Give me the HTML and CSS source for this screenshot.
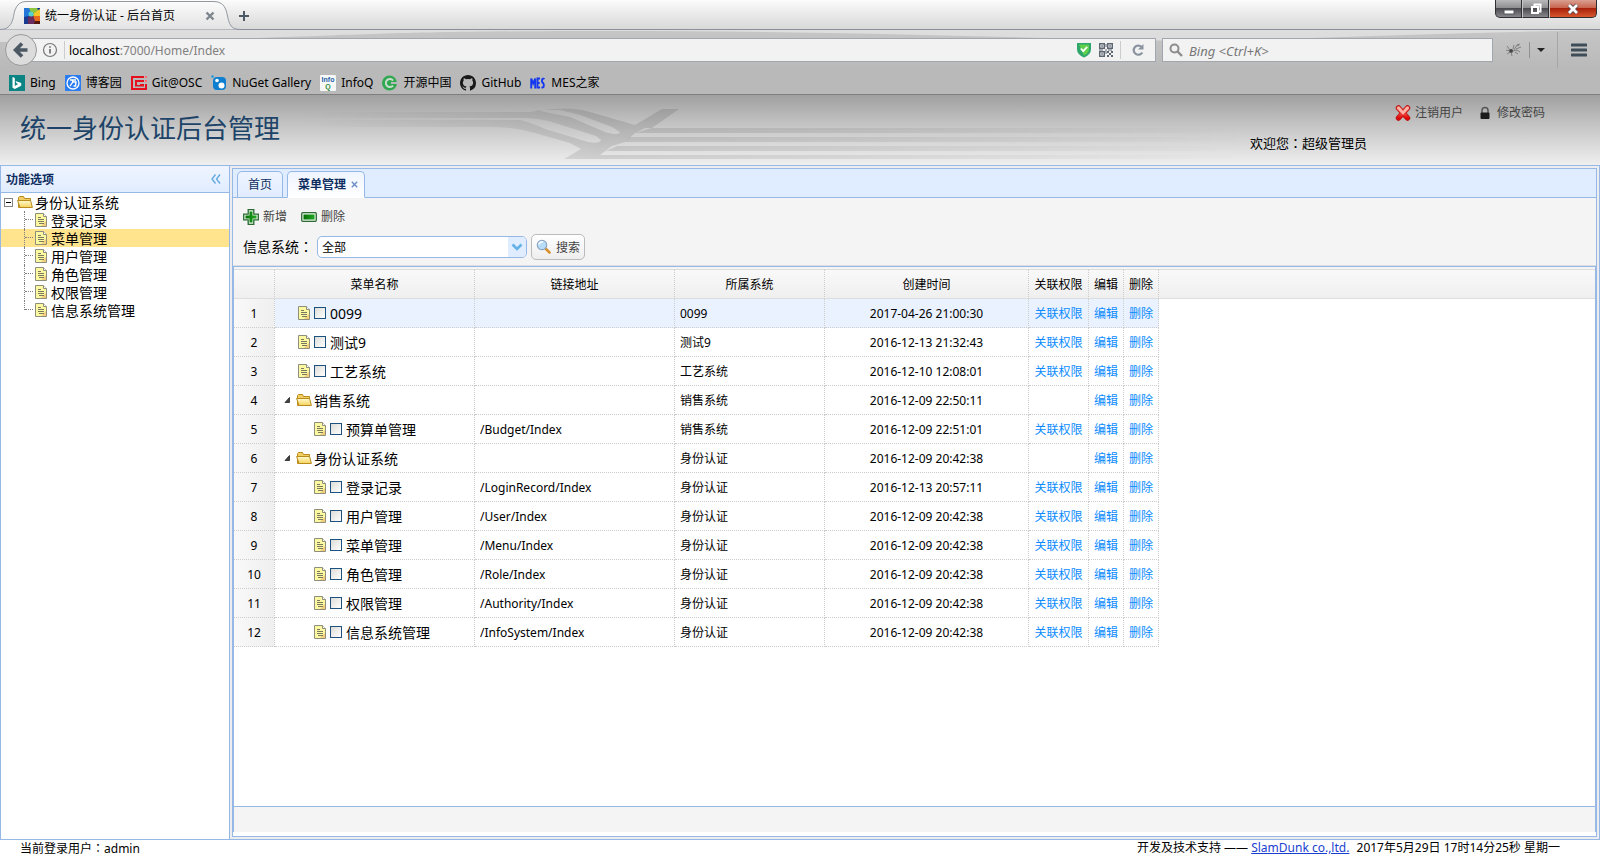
FILE: index.html
```html
<!DOCTYPE html>
<html lang="zh-CN">
<head>
<meta charset="utf-8">
<title>统一身份认证 - 后台首页</title>
<link rel="stylesheet" href="styles.css">
</head>
<body>
<svg class="defs" aria-hidden="true">
  <defs>
    <linearGradient id="gFolder" x1="0" y1="0" x2="0" y2="1"><stop offset="0" stop-color="#fffbd0"/><stop offset="1" stop-color="#f5d25a"/></linearGradient>
    <linearGradient id="gRed" x1="0" y1="0" x2="0" y2="1"><stop offset="0" stop-color="#ff9a8c"/><stop offset="1" stop-color="#e00808"/></linearGradient>
    <linearGradient id="gGreen" x1="0" y1="0" x2="1" y2="0"><stop offset="0" stop-color="#067006"/><stop offset="1" stop-color="#22a822"/></linearGradient>
    <linearGradient id="gTab" x1="0" y1="0" x2="0" y2="1"><stop offset="0" stop-color="#fbfbfb"/><stop offset="1" stop-color="#e3e3e3"/></linearGradient>
    <linearGradient id="gBeam" gradientUnits="userSpaceOnUse" x1="300" y1="0" x2="600" y2="50"><stop offset="0" stop-color="#000" stop-opacity="0"/><stop offset=".6" stop-color="#000" stop-opacity=".06"/><stop offset="1" stop-color="#000" stop-opacity=".11"/></linearGradient>
    <linearGradient id="gLine" gradientUnits="userSpaceOnUse" x1="600" y1="0" x2="1250" y2="0"><stop offset="0" stop-color="#000" stop-opacity=".11"/><stop offset=".35" stop-color="#000" stop-opacity=".08"/><stop offset="1" stop-color="#000" stop-opacity="0"/></linearGradient>
  </defs>
  <symbol id="file" viewBox="0 0 16 16"><path d="M2.500 1.500h8l3 3v10h-11z" fill="#fdf9a0" stroke="#8e8e7c"/><path d="M10.500 1.500v3h3" fill="#fff" stroke="#8e8e7c"/><path d="M13 9v5H8z" fill="#f3cf7c"/><path d="M5 5.500h3M5 7.500h6M5 9.500h6M6 11.500h5" stroke="#7b7860"/></symbol>
  <symbol id="folder" viewBox="0 0 16 16"><path d="M1.500 13.500v-10l1-1h4l1 2h6v9z" fill="#f3cf63" stroke="#b98a1e"/><path d="M3 13.500L.6 6.500h13l1.800 7z" fill="url(#gFolder)" stroke="#b98a1e"/></symbol>
  <symbol id="open" viewBox="0 0 16 16"><path d="M5 10.500h4.500V5.500z" fill="#444" stroke="#222" stroke-width=".8"/></symbol>
</svg>

<header class="browser">
  <div class="tabstrip">
    <div class="btab">
      <svg class="btab-shape" width="242" height="30" viewBox="0 0 242 30"><path d="M0 29.500C14 29.500 13 15 15 10Q18 1.500 26 1.500H214Q223 1.500 226 10C229 20 228 29.500 240 29.500" fill="url(#gTab)" stroke="#9299a3"/></svg>
      <svg class="i16" viewBox="0 0 16 16"><rect width="16" height="16" fill="#193a8e"/><path d="M0 0h8l1 7-9 2z" fill="#2477d8"/><path d="M5 0h8l3 6-7 3z" fill="#8ec63f"/><path d="M10 5l6-4v8l-6 2z" fill="#f6c52a"/><path d="M8 8l8 0v5l-6 2z" fill="#e96a1d"/><path d="M4 9l5-2 3 9H4z" fill="#6a2b5e"/><circle cx="7" cy="6" r="2.500" fill="#59d0cf"/><path d="M11 13h5v3h-6z" fill="#54160d"/></svg>
      <span class="btab-title">统一身份认证 - 后台首页</span>
      <button class="plain" aria-label="关闭标签页"><svg width="10" height="10" viewBox="0 0 10 10"><path d="M1.500 1.500l7 7M8.500 1.500l-7 7" stroke="#7d858d" stroke-width="2.400"/></svg></button>
    </div>
    <button class="plain newtab" aria-label="新标签页"><svg width="12" height="12" viewBox="0 0 12 12"><path d="M6 1v10M1 6h10" stroke="#4d5a66" stroke-width="2"/></svg></button>
    <div class="wincontrols">
      <button class="win" aria-label="最小化"><svg width="12" height="14" viewBox="0 0 12 14"><rect x="1" y="8" width="10" height="4" fill="#fff" stroke="#55565e"/></svg></button>
      <button class="win" aria-label="还原"><svg width="14" height="14" viewBox="0 0 14 14"><path d="M5.500 4V2.500h6v7H10" fill="none" stroke="#fff" stroke-width="2"/><rect x="3" y="5" width="6" height="6" fill="none" stroke="#fff" stroke-width="2"/></svg></button>
      <button class="win close" aria-label="关闭"><svg width="14" height="14" viewBox="0 0 14 14"><path d="M3 3l8 8M11 3l-8 8" stroke="#5b4750" stroke-width="4.500"/><path d="M3 3l8 8M11 3l-8 8" stroke="#fff" stroke-width="2.800"/></svg></button>
    </div>
  </div>
  <div class="toolbar">
    <svg class="streak" viewBox="0 0 1600 30" preserveAspectRatio="none"><path d="M0 0H1600Q1450 3 1280 9Q1200 12 1130 10C960 6 800 1 610 1S380 4 260 8Q120 11 0 12z" fill="#fff" fill-opacity=".42"/></svg>
    <button class="back" aria-label="后退"><svg width="16" height="16" viewBox="0 0 16 16"><path d="M9 1.500L2.500 8 9 14.500M3 8h11.500" fill="none" stroke="#4c5864" stroke-width="3.600"/></svg></button>
    <div class="urlbar">
      <svg class="info" width="16" height="16" viewBox="0 0 16 16"><circle cx="8" cy="8" r="6.500" fill="none" stroke="#777" stroke-width="1.200"/><path d="M8 7v4.500M8 4.200v1.600" stroke="#666" stroke-width="1.600"/></svg>
      <span class="vsep"></span>
      <span class="url"><b>localhost</b>:7000/Home/Index</span>
      <svg width="16" height="16" viewBox="0 0 16 16"><path d="M1 1h14v6c0 5-4 7-7 8.500C5 14 1 12 1 7z" fill="#2fa66b"/><path d="M3 2.500h10V7c0 3.500-3 5.500-5 6.500z" fill="#5fcf4c"/><path d="M4.800 6.500l2.400 2.600 4-4.200" fill="none" stroke="#fff" stroke-width="1.800"/></svg>
      <svg width="16" height="16" viewBox="0 0 16 16"><path d="M1.700 1.700h4.600v4.600H1.700zM9.700 1.700h4.600v4.600H9.700zM1.700 9.700h4.600v4.600H1.700z" fill="none" stroke="#5d6772" stroke-width="1.400"/><path d="M3.300 3.300h1.500v1.500H3.300zM11.300 3.300h1.500v1.500h-1.500zM3.300 11.300h1.500v1.500H3.300zM9 9h2v2H9zM13 9h2v2h-2zM11 11h2v2h-2zM9 13h2v2H9zM13 13h2v2h-2zM7.500 2h1v3h-1zM1 7.500h4v1H1zM7.500 7h1v5h-1zM10 7.500h4v1h-4z" fill="#5d6772"/></svg>
      <span class="vsep"></span>
      <svg class="reload" width="14" height="14" viewBox="0 0 14 14"><path d="M10.500 3.800A4.600 4.600 0 1 0 11.300 9.500" fill="none" stroke="#8994a0" stroke-width="2.200"/><path d="M12.500 1v5.500H7z" fill="#8994a0"/></svg>
    </div>
    <div class="search">
      <svg width="14" height="14" viewBox="0 0 14 14"><circle cx="5.500" cy="5.500" r="4" fill="none" stroke="#8c8c8c" stroke-width="2"/><path d="M8.500 8.500l4.500 4.500" stroke="#8c8c8c" stroke-width="2.400"/></svg>
      <input type="text" placeholder="Bing &lt;Ctrl+K&gt;" aria-label="搜索">
    </div>
    <svg class="bug" width="16" height="14" viewBox="0 0 16 14"><circle cx="5" cy="8" r="2" fill="#444"/><path d="M1 3l3 4M0 7l4 1M1 11l3-2M5 9l1 4M7 8l4-1 3 2M7 6l1-4M8 7l3-5 2 1M10 6l5-2M11 2l3-1M9 9l3 2" stroke="#777" stroke-width=".9" fill="none"/></svg>
    <span class="tsep"></span>
    <svg class="caret" width="8" height="5" viewBox="0 0 8 5"><path d="M0 0h8L4 4z" fill="#222"/></svg>
    <span class="tsep long"></span>
    <button class="plain burger" aria-label="菜单"><svg width="16" height="14" viewBox="0 0 16 14"><path d="M1 2h14M1 7h14M1 12h14" stroke="#3e4d57" stroke-width="3" stroke-linecap="round"/></svg></button>
  </div>
  <nav class="bookmarks">
    <a href="#"><svg class="i16" viewBox="0 0 16 16"><rect width="16" height="16" fill="#0c8484"/><path d="M3.500 2l2.300.9v8.200l3.400-2-1.700-.8-1-2.400 5.700 2v2.800L5.800 14l-2.300-1.300z" fill="#fff"/></svg>Bing</a>
    <a href="#"><svg class="i16" viewBox="0 0 16 16"><rect width="16" height="16" rx="1" fill="#2a7cf0"/><circle cx="8" cy="8" r="6" fill="none" stroke="#fff" stroke-width="1.300"/><path d="M5 5h6M8 5c0 3-1 4-3 6M8 7h3l-.5 4H8.500" fill="none" stroke="#fff" stroke-width="1.400"/></svg>博客园</a>
    <a href="#"><svg class="i16" viewBox="0 0 16 16"><path d="M0 1h13v2H2v10h12V9h2v6H0z" fill="#e60f1d"/><path d="M4 5h9v2H6v3h3V9h4v2.500H4z" fill="#e60f1d"/><path d="M14 1h2v2h-2zM14 5h2v2h-2z" fill="#ff6a70"/></svg>Git@OSC</a>
    <a href="#"><svg class="i16" viewBox="0 0 16 16"><circle cx="1.500" cy="1.500" r="1.300" fill="#1b9de0"/><rect x="2" y="2" width="13" height="13" rx="4" fill="#0c7fd0"/><circle cx="6" cy="5.500" r="1.800" fill="#fff"/><circle cx="10.500" cy="10.500" r="3" fill="#fff"/></svg>NuGet Gallery</a>
    <a href="#"><svg class="i16" viewBox="0 0 16 16"><rect width="16" height="16" rx="1" fill="#f8f8f8"/><text x="8" y="7" class="g-info">Info</text><text x="8" y="14" class="g-q">Q</text></svg>InfoQ</a>
    <a href="#"><svg class="i16" viewBox="0 0 16 16"><circle cx="7.500" cy="8" r="7.500" fill="#2fa84f"/><path d="M11 5.500A4 4 0 1 0 11 10.500" fill="none" stroke="#c9dccd" stroke-width="2"/><path d="M9 7h7v2H9z" fill="#b9b9b9"/></svg>开源中国</a>
    <a href="#"><svg class="i16" viewBox="0 0 16 16"><path d="M8 0C3.580 0 0 3.580 0 8c0 3.540 2.290 6.530 5.470 7.590.4.070.55-.17.55-.38v-1.340c-2.230.48-2.700-1.070-2.700-1.070-.36-.93-.89-1.180-.89-1.180-.73-.5.05-.48.05-.48.8.05 1.230.82 1.230.82.71 1.220 1.870.87 2.330.66.070-.52.28-.87.51-1.070-1.780-.2-3.640-.89-3.640-3.950 0-.87.310-1.590.82-2.150-.08-.2-.36-1.020.08-2.120 0 0 .67-.21 2.200.82a7.600 7.600 0 0 1 4 0c1.530-1.040 2.200-.82 2.200-.82.44 1.100.16 1.920.08 2.120.51.56.82 1.270.82 2.150 0 3.070-1.870 3.750-3.650 3.950.29.25.54.73.54 1.480v2.200c0 .21.15.46.55.38A8 8 0 0 0 16 8c0-4.420-3.580-8-8-8z" fill="#1a1a1a"/></svg>GitHub</a>
    <a href="#"><svg class="i16" viewBox="0 0 16 16"><path d="M1.200 13.500V3.500l2 5 2-5v10M10 3.500H7.500v9H10M7.500 8h2.200M14.500 4C12 2.500 11 6 13 8s.5 5.500-1.500 4.300" fill="none" stroke="#1438f0" stroke-width="1.900"/></svg>MES之家</a>
  </nav>
</header>

<header class="banner">
  <svg class="swoosh" viewBox="0 0 1600 70" preserveAspectRatio="none">
    <path fill-rule="evenodd" fill="url(#gBeam)" d="M300 17H530Q570 10 590 17L635 30 662 14H679L652 33H645L635 38 625 47 612 51 600 60V64H564L581 54 570 48 535 38Q515 32 490 32H300zM300 23V25H520Q535 29 545 34L588 47Q600 49 601 45L596 41 555 28Q540 23 520 23zM535 15L570 22 605 37Q619 41 620 37L612 32 580 20 560 15z"/>
    <g fill="url(#gLine)"><path d="M652 33H1250v5H635zM630 42H1250v5H625zM617 51H1250v5H606zM600 60H1250v4H600z"/></g>
  </svg>
  <h1>统一身份认证后台管理</h1>
  <div class="account">
    <div class="account-links">
      <a href="#"><svg class="i16" viewBox="0 0 16 16"><path d="M3.500 3l9 10M12.500 3l-9 10" stroke="#c01010" stroke-width="5.500" stroke-linecap="round"/><path d="M3.500 3l9 10M12.500 3l-9 10" stroke="url(#gRed)" stroke-width="3.500" stroke-linecap="round"/><path d="M3.500 3l4.500 5 4.500-5" stroke="#ffb3a8" stroke-width="2.500" stroke-linecap="round" fill="none"/></svg>注销用户</a>
      <a href="#"><svg class="i16" viewBox="0 0 16 16"><path d="M5 8V5.500a3 3 0 0 1 6 0V8" fill="none" stroke="#555" stroke-width="1.500"/><rect x="3.500" y="7.500" width="9" height="6.500" rx="1" fill="#1c1c1c"/></svg>修改密码</a>
    </div>
    <p class="welcome">欢迎您<span class="colon" lang="zh-TW">：</span>超级管理员</p>
  </div>
</header>

<div class="layout">
  <aside class="west">
    <div class="west-head"><h2>功能选项</h2><button class="plain" aria-label="折叠"><svg width="10" height="10" viewBox="0 0 10 10"><path d="M4.500 .5L1 5l3.500 4.500M9 .5L5.500 5 9 9.500" fill="none" stroke="#5fa8e0" stroke-width="1.300"/></svg></button></div>
    <ul class="tree">
      <li class="root"><span class="minus"></span><svg class="i16" ><use href="#folder"/></svg><span>身份认证系统</span></li>
      <li><span class="twig"></span><svg class="i16"><use href="#file"/></svg><span>登录记录</span></li>
      <li class="on"><span class="twig"></span><svg class="i16"><use href="#file"/></svg><span>菜单管理</span></li>
      <li><span class="twig"></span><svg class="i16"><use href="#file"/></svg><span>用户管理</span></li>
      <li><span class="twig"></span><svg class="i16"><use href="#file"/></svg><span>角色管理</span></li>
      <li><span class="twig"></span><svg class="i16"><use href="#file"/></svg><span>权限管理</span></li>
      <li><span class="twig last"></span><svg class="i16"><use href="#file"/></svg><span>信息系统管理</span></li>
    </ul>
  </aside>
  <main class="center">
    <div class="tabs">
      <button class="tab">首页</button>
      <button class="tab active">菜单管理<svg width="7" height="7" viewBox="0 0 7 7"><path d="M.8.8l5.400 5.400M6.200.8L.8 6.200" stroke="#6b8cc4" stroke-width="1.400"/></svg></button>
    </div>
    <div class="tools">
      <div class="tool-row">
        <button class="plain tool"><svg class="i16" viewBox="0 0 16 16"><path d="M5.200.7h5.600v4.500h4.500v5.600h-4.500v4.500H5.200v-4.500H.7V5.200h4.500z" fill="#e8f5e8" stroke="#2c6b34" stroke-width="1.300"/><path d="M6.500 2.500h3v4h4v3h-4v4h-3v-4h-4v-3h4z" fill="url(#gGreen)"/></svg>新增</button>
        <button class="plain tool"><svg class="i16" viewBox="0 0 16 16"><rect x=".7" y="3.700" width="14.600" height="8.600" rx="1" fill="#e8f5e8" stroke="#2c6b34" stroke-width="1.300"/><rect x="2.500" y="5.500" width="11" height="5" fill="url(#gGreen)"/></svg>删除</button>
      </div>
      <form class="query">
        <label for="sys">信息系统<span class="colon" lang="zh-TW">：</span></label>
        <span class="combo"><select id="sys"><option>全部</option></select><svg width="18" height="20" viewBox="0 0 18 20"><path d="M4.500 7.500L9 12l4.500-4.500" fill="none" stroke="#63b2e6" stroke-width="2.600"/></svg></span>
        <button class="find" type="button"><svg class="i16" viewBox="0 0 16 16"><path d="M9.500 9.500l4 4" stroke="#d9902f" stroke-width="2.600" stroke-linecap="round"/><circle cx="6" cy="6" r="4.700" fill="#b8dcf8" stroke="#8ba6c4" stroke-width="1.200"/><path d="M3 5.500a3 3 0 0 1 4-2.500" stroke="#fff" stroke-width="1.500" fill="none"/></svg><span>搜索</span></button>
      </form>
    </div>
    <div class="grid">
      <table>
        <colgroup><col class="c-no"><col class="c-name"><col class="c-url"><col class="c-sys"><col class="c-time"><col class="c-auth"><col class="c-op"><col class="c-op"><col></colgroup>
        <thead><tr><th></th><th>菜单名称</th><th>链接地址</th><th>所属系统</th><th>创建时间</th><th>关联权限</th><th>编辑</th><th>删除</th><th class="rest"></th></tr></thead>
        <tbody>
          <tr class="hover"><td class="no">1</td><td><label class="node leaf"><svg class="i16"><use href="#file"/></svg><input type="checkbox">0099</label></td><td></td><td>0099</td><td class="mid">2017-04-26 21:00:30</td><td class="mid"><a href="#">关联权限</a></td><td class="mid"><a href="#">编辑</a></td><td class="mid"><a href="#">删除</a></td><td class="rest"></td></tr>
          <tr><td class="no">2</td><td><label class="node leaf"><svg class="i16"><use href="#file"/></svg><input type="checkbox">测试9</label></td><td></td><td>测试9</td><td class="mid">2016-12-13 21:32:43</td><td class="mid"><a href="#">关联权限</a></td><td class="mid"><a href="#">编辑</a></td><td class="mid"><a href="#">删除</a></td><td class="rest"></td></tr>
          <tr><td class="no">3</td><td><label class="node leaf"><svg class="i16"><use href="#file"/></svg><input type="checkbox">工艺系统</label></td><td></td><td>工艺系统</td><td class="mid">2016-12-10 12:08:01</td><td class="mid"><a href="#">关联权限</a></td><td class="mid"><a href="#">编辑</a></td><td class="mid"><a href="#">删除</a></td><td class="rest"></td></tr>
          <tr><td class="no">4</td><td><span class="node"><svg class="i16"><use href="#open"/></svg><svg class="i16 dir"><use href="#folder"/></svg>销售系统</span></td><td></td><td>销售系统</td><td class="mid">2016-12-09 22:50:11</td><td></td><td class="mid"><a href="#">编辑</a></td><td class="mid"><a href="#">删除</a></td><td class="rest"></td></tr>
          <tr><td class="no">5</td><td><label class="node leaf deep"><svg class="i16"><use href="#file"/></svg><input type="checkbox">预算单管理</label></td><td>/Budget/Index</td><td>销售系统</td><td class="mid">2016-12-09 22:51:01</td><td class="mid"><a href="#">关联权限</a></td><td class="mid"><a href="#">编辑</a></td><td class="mid"><a href="#">删除</a></td><td class="rest"></td></tr>
          <tr><td class="no">6</td><td><span class="node"><svg class="i16"><use href="#open"/></svg><svg class="i16 dir"><use href="#folder"/></svg>身份认证系统</span></td><td></td><td>身份认证</td><td class="mid">2016-12-09 20:42:38</td><td></td><td class="mid"><a href="#">编辑</a></td><td class="mid"><a href="#">删除</a></td><td class="rest"></td></tr>
          <tr><td class="no">7</td><td><label class="node leaf deep"><svg class="i16"><use href="#file"/></svg><input type="checkbox">登录记录</label></td><td>/LoginRecord/Index</td><td>身份认证</td><td class="mid">2016-12-13 20:57:11</td><td class="mid"><a href="#">关联权限</a></td><td class="mid"><a href="#">编辑</a></td><td class="mid"><a href="#">删除</a></td><td class="rest"></td></tr>
          <tr><td class="no">8</td><td><label class="node leaf deep"><svg class="i16"><use href="#file"/></svg><input type="checkbox">用户管理</label></td><td>/User/Index</td><td>身份认证</td><td class="mid">2016-12-09 20:42:38</td><td class="mid"><a href="#">关联权限</a></td><td class="mid"><a href="#">编辑</a></td><td class="mid"><a href="#">删除</a></td><td class="rest"></td></tr>
          <tr><td class="no">9</td><td><label class="node leaf deep"><svg class="i16"><use href="#file"/></svg><input type="checkbox">菜单管理</label></td><td>/Menu/Index</td><td>身份认证</td><td class="mid">2016-12-09 20:42:38</td><td class="mid"><a href="#">关联权限</a></td><td class="mid"><a href="#">编辑</a></td><td class="mid"><a href="#">删除</a></td><td class="rest"></td></tr>
          <tr><td class="no">10</td><td><label class="node leaf deep"><svg class="i16"><use href="#file"/></svg><input type="checkbox">角色管理</label></td><td>/Role/Index</td><td>身份认证</td><td class="mid">2016-12-09 20:42:38</td><td class="mid"><a href="#">关联权限</a></td><td class="mid"><a href="#">编辑</a></td><td class="mid"><a href="#">删除</a></td><td class="rest"></td></tr>
          <tr><td class="no">11</td><td><label class="node leaf deep"><svg class="i16"><use href="#file"/></svg><input type="checkbox">权限管理</label></td><td>/Authority/Index</td><td>身份认证</td><td class="mid">2016-12-09 20:42:38</td><td class="mid"><a href="#">关联权限</a></td><td class="mid"><a href="#">编辑</a></td><td class="mid"><a href="#">删除</a></td><td class="rest"></td></tr>
          <tr><td class="no">12</td><td><label class="node leaf deep"><svg class="i16"><use href="#file"/></svg><input type="checkbox">信息系统管理</label></td><td>/InfoSystem/Index</td><td>身份认证</td><td class="mid">2016-12-09 20:42:38</td><td class="mid"><a href="#">关联权限</a></td><td class="mid"><a href="#">编辑</a></td><td class="mid"><a href="#">删除</a></td><td class="rest"></td></tr>
        </tbody>
      </table>
      <div class="pager"></div>
    </div>
  </main>
</div>

<footer class="status">
  <span>当前登录用户<span class="colon" lang="zh-TW">：</span>admin</span>
  <span class="support">开发及技术支持 —— <a href="#">SlamDunk co.,ltd.</a> <time>2017年5月29日 17时14分25秒 星期一</time></span>
</footer>
</body>
</html>
```
FILE: styles.css
```css
* { box-sizing: border-box; }
body {
  margin: 0;
  min-height: 100vh;
  display: flex;
  flex-direction: column;
  background: #fff;
  color: #000;
  font: 12px/18px "Noto Sans", "Noto Sans CJK SC", sans-serif;
}
h1, h2, p, ul { margin: 0; padding: 0; }
a { color: inherit; text-decoration: none; }
button, input, select { font: inherit; color: inherit; }
svg { flex: none; display: block; }
.defs { position: absolute; width: 0; height: 0; }
.i16 { width: 16px; height: 16px; }
.plain { display: flex; align-items: center; padding: 0; border: 0; background: none; }
.colon { font-family: "Noto Sans CJK TC", sans-serif; }

/* browser frame */
.tabstrip {
  display: flex;
  align-items: center;
  height: 30px;
  background: linear-gradient(#fcfcfc, #e9e9e9 50%, #d9d9d9);
  border-bottom: 1px solid #8b8f99;
}
.btab {
  position: relative;
  display: flex;
  align-items: center;
  width: 238px;
  height: 30px;
  padding: 2px 23px 0 24px;
}
.btab > * { position: relative; }
.btab > .btab-shape { position: absolute; left: 0; top: 0; }
.btab-title { flex: 1; margin-left: 5px; }
.newtab { padding-top: 2px; }
.wincontrols { display: flex; align-self: flex-start; margin: 0 3px 0 auto; }
.win {
  display: flex;
  align-items: center;
  justify-content: center;
  width: 27px;
  height: 18px;
  padding: 0;
  border: 1px solid #2e2e33;
  border-top: 0;
  border-left-color: #c9c9c9;
  background: linear-gradient(#b9b9bb, #8f8f92 45%, #4a4a50 50%, #88888c);
}
.win:first-child { border-left-color: #2e2e33; border-radius: 0 0 0 5px; }
.close { width: 48px; border-radius: 0 0 5px 0; background: linear-gradient(#d9a091, #c96650 45%, #a8210a 50%, #d8582e); }
.toolbar {
  position: relative;
  display: flex;
  align-items: center;
  height: 38px;
  padding: 2px 13px 0 0;
  background: linear-gradient(#c6c6c6, #b9b9b9);
}
.toolbar > * { position: relative; }
.toolbar > .streak { position: absolute; left: 0; top: 0; width: 100%; height: 30px; }
.back {
  z-index: 1;
  display: flex;
  align-items: center;
  justify-content: center;
  width: 32px;
  height: 32px;
  margin-left: 5px;
  padding: 0;
  border: 1px solid #999;
  border-radius: 50%;
  background: #dcdcdc;
}
.urlbar, .search {
  display: flex;
  align-items: center;
  height: 24px;
  border: 1px solid #a2a6ae;
  background: #f2f2f2;
}
.urlbar { flex: 1; margin-left: -6px; padding: 0 10px 0 11px; gap: 6px; border-left: 0; }
.urlbar .vsep { width: 1px; height: 18px; background: #ccc; }
.urlbar .reload { margin-left: 4px; }
.url { flex: 1; margin-left: -2px; padding-top: 2px; color: #808080; }
.url b { color: #000; font-weight: 400; }
.search { width: 331px; margin: 0 13px 0 6px; padding: 0 6px; gap: 6px; }
.search input { flex: 1; min-width: 0; padding: 2px 0 0; border: 0; background: none; font-size: 13px; font-style: italic; }
.search input::placeholder { color: #777; }
.tsep { width: 1px; height: 16px; margin: 0 7px; background: #909090; }
.tsep.long { height: 36px; margin: 0 13px 0 12px; background: #a6a6a6; }
.bookmarks {
  display: flex;
  gap: 9px;
  height: 27px;
  padding: 6px 9px 2px;
  background: #b9b9b9;
  border-bottom: 1px solid #7f7f7f;
}
.bookmarks a { display: flex; align-items: center; gap: 5px; height: 18px; }
.g-info, .g-q { text-anchor: middle; font: bold 7px "Liberation Sans", sans-serif; fill: #1d5fa8; }
.g-q { fill: #2f8a3b; }

/* page banner */
.banner {
  position: relative;
  display: flex;
  justify-content: space-between;
  height: 70px;
  padding: 0 55px 0 20px;
  background: linear-gradient(#a0a0a0, #c6c6c6 45%, #efefef);
}
.banner > * { position: relative; }
.banner > .swoosh { position: absolute; left: 0; top: 0; width: 100%; height: 100%; }
h1 { padding-top: 16px; color: #1d4468; font-size: 26px; line-height: 34px; font-weight: 400; }
.account { padding-top: 9px; color: #444; }
.account-links { display: flex; gap: 14px; }
.account-links a { display: flex; align-items: center; gap: 4px; }
.welcome { padding-top: 11px; margin-left: -145px; color: #000; font-size: 13px; line-height: 20px; }

/* layout panels */
.layout {
  flex: 1;
  display: flex;
  gap: 2px;
  padding-right: 2px;
  background: #ededf0;
  border: 1px solid #95b8e7;
}
.west { width: 229px; display: flex; flex-direction: column; background: #fff; border-right: 1px solid #95b8e7; }
.west-head {
  display: flex;
  justify-content: space-between;
  align-items: center;
  height: 27px;
  padding: 0 8px 0 5px;
  background: linear-gradient(#eff5ff, #e0ecff);
  border-bottom: 1px solid #95b8e7;
}
h2 { padding-top: 2px; color: #0e2d5f; font-size: 12px; line-height: 18px; }
.tree { list-style: none; font-size: 14px; }
.tree li { display: flex; align-items: center; height: 18px; }
.tree li > span:last-child { padding: 2px 0 0 2px; }
.tree .on { background: #ffe48d; }
.minus {
  width: 9px;
  height: 9px;
  margin: 0 4px 0 3px;
  border: 1px solid #848484;
  background: linear-gradient(#000, #000) center / 5px 1px no-repeat #fff;
}
.twig { position: relative; width: 9px; height: 18px; margin-left: 23px; border-left: 1px dotted #808080; }
.twig::after { content: ""; position: absolute; left: 0; top: 8px; width: 8px; border-top: 1px dotted #808080; }
.twig.last { height: 9px; align-self: flex-start; }
.center {
  flex: 1;
  min-width: 0;
  display: flex;
  flex-direction: column;
  margin: 2px 0;
  padding-bottom: 4px;
  background: #fff;
  border: 1px solid #95b8e7;
}
.tabs { display: flex; align-items: flex-end; gap: 4px; height: 29px; padding: 2px 4px 0; background: #e0ecff; border-bottom: 1px solid #95b8e7; }
.tab {
  display: flex;
  align-items: center;
  gap: 5px;
  height: 27px;
  margin-bottom: -1px;
  padding: 0 10px;
  border: 1px solid #95b8e7;
  border-radius: 5px 5px 0 0;
  background: linear-gradient(#eff5ff, #e0ecff);
  color: #0e2d5f;
}
.tab.active { padding-right: 6px; background: linear-gradient(#eff5ff, #fff); border-bottom-color: #fff; font-weight: 700; }
.tools { padding: 10px 10px 5px; background: #f4f4f4; border-bottom: 1px solid #ddd; }
.tool-row { display: flex; gap: 14px; color: #444; }
.tool { gap: 4px; height: 18px; }
.query { display: flex; align-items: center; margin-top: 8px; height: 26px; }
.query label { width: 74px; padding-bottom: 2px; font-size: 14px; white-space: nowrap; }
.combo { position: relative; width: 210px; height: 22px; border: 1px solid #95b8e7; border-radius: 5px; background: #fff; overflow: hidden; }
.combo select { width: 100%; height: 20px; padding: 1px 4px 0; border: 0; appearance: none; background: none; }
.combo svg { position: absolute; right: 0; top: 0; background: #e0ecff; pointer-events: none; }
.find {
  display: flex;
  align-items: center;
  gap: 4px;
  height: 26px;
  margin-left: 4px;
  padding: 0 4px;
  border: 1px solid #bbb;
  border-radius: 5px;
  background: linear-gradient(#fff, #eee);
  color: #444;
}
.find span { padding-top: 2px; }

/* tree grid */
.grid { flex: 1; display: flex; flex-direction: column; justify-content: space-between; border: 1px solid #95b8e7; border-bottom: 0; }
table { width: 100%; table-layout: fixed; border-collapse: separate; border-spacing: 0; border-top: 2px solid #f4f4f4; }
.c-no { width: 41px; }
.c-name, .c-url { width: 200px; }
.c-sys { width: 150px; }
.c-time { width: 204px; }
.c-auth { width: 60px; }
.c-op { width: 35px; }
th, td { height: 29px; padding: 2px 5px 0; border-right: 1px dotted #ccc; border-bottom: 1px dotted #ccc; white-space: nowrap; }
th { height: 30px; font-weight: 400; background: linear-gradient(#f9f9f9, #efefef); border-top: 1px solid #ddd; border-bottom: 1px solid #ddd; }
th.rest { border-right: 0; }
td.rest { border: 0; background: #fff; }
td.no { text-align: center; background: linear-gradient(to right, #f9f9f9, #efefef); }
.mid { text-align: center; }
td a { color: #0b8bff; }
tr.hover td:not(.no):not(.rest) { background: #eaf2ff; }
.node { display: flex; align-items: center; font-size: 14px; }
.node .i16 { margin-bottom: 2px; }
.node .dir { margin-right: 2px; }
.leaf { padding-left: 16px; }
.deep { padding-left: 32px; }
.node input {
  appearance: none;
  width: 12px;
  height: 12px;
  margin: 0 4px 2px 2px;
  border: 1px solid #1c5180;
  background: linear-gradient(135deg, #dcdcd7, #fff);
}
.pager { height: 26px; background: #f4f4f4; border-top: 1px solid #95b8e7; }

.status { display: flex; justify-content: space-between; height: 20px; padding: 0 40px 0 20px; line-height: 16px; }
.status a { color: #1a3fd0; text-decoration: underline; }
.status time { margin-left: 4px; }
```
